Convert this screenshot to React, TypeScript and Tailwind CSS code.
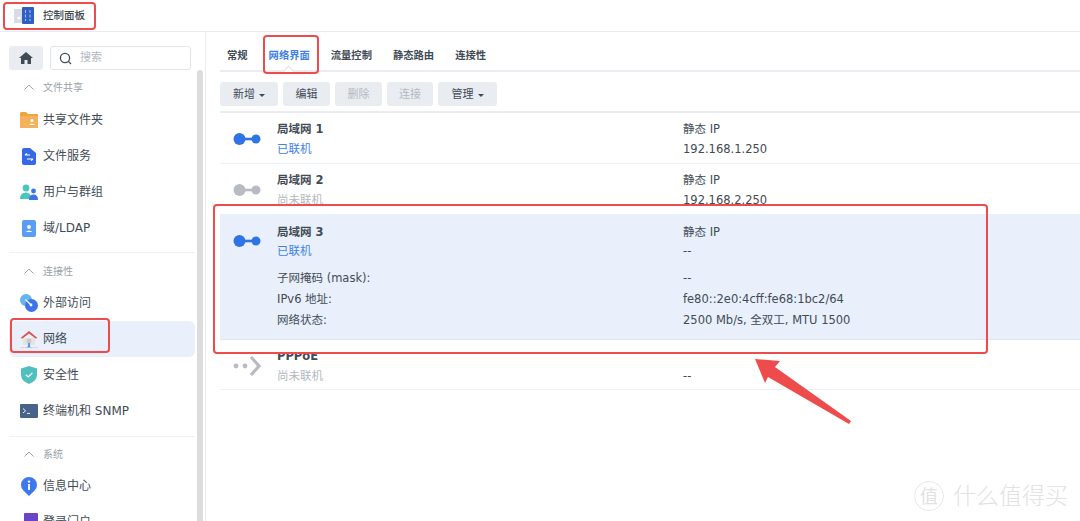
import React from 'react';

const font = { fontFamily: '"DejaVu Sans", "Noto Sans CJK SC", sans-serif' };

const LinkIcon = ({ color }: { color: string }) => (
  <svg width="28" height="16" viewBox="0 0 28 16" className="block">
    <circle cx="6.5" cy="8" r="6" fill={color} />
    <rect x="10" y="6.7" width="12" height="2.6" fill={color} />
    <circle cx="23" cy="8" r="4.5" fill={color} />
  </svg>
);

const PppoeIcon = () => (
  <svg width="28" height="22" viewBox="0 0 28 22" className="block">
    <circle cx="3" cy="11" r="2.4" fill="#b8bcc2" />
    <circle cx="12" cy="11" r="2.4" fill="#b8bcc2" />
    <path d="M18 2 L26 11 L18 20" fill="none" stroke="#b8bcc2" strokeWidth="3.2" />
  </svg>
);

const Icon = ({ name }: { name: string }) => {
  if (name === 'folder')
    return (
      <svg width="18" height="16" viewBox="0 0 18 16">
        <path d="M0 1.5 Q0 0 1.5 0 H6 L8 2 H17 Q18 2 18 3 V15 Q18 16 17 16 H1 Q0 16 0 15Z" fill="#f0a33e" />
        <path d="M0 4 H18 V15 Q18 16 17 16 H1 Q0 16 0 15Z" fill="#f6b25a" />
        <circle cx="12" cy="8.5" r="1.6" fill="#fff" />
        <path d="M8.8 13 Q12 9.8 15.2 13Z" fill="#fff" />
      </svg>
    );
  if (name === 'file')
    return (
      <svg width="16" height="17" viewBox="0 0 16 17">
        <path d="M1 2 Q1 0 3 0 H9 L15 5 V15 Q15 17 13 17 H3 Q1 17 1 15Z" fill="#3569e8" />
        <path d="M4 7 H9 M4 7 L6 5.4 M12 11 H6 M12 11 L10 12.6" stroke="#fff" strokeWidth="1.1" fill="none" />
      </svg>
    );
  if (name === 'users')
    return (
      <svg width="18" height="16" viewBox="0 0 18 16">
        <circle cx="6" cy="4" r="3.4" fill="#4cc4c0" />
        <path d="M0 15 Q0 8.5 6 8.5 Q11 8.5 11.5 15Z" fill="#4cc4c0" />
        <circle cx="13.5" cy="7" r="2.4" fill="#3f73e8" />
        <path d="M9 16 Q9 10.5 13.5 10.5 Q18 10.5 18 16Z" fill="#3f73e8" />
      </svg>
    );
  if (name === 'ldap')
    return (
      <svg width="16" height="17" viewBox="0 0 16 17">
        <rect x="1" y="0" width="14" height="17" rx="2" fill="#5a9df2" />
        <circle cx="8" cy="7" r="1.9" fill="#fff" />
        <path d="M4.5 12 Q8 8.8 11.5 12Z" fill="#fff" />
      </svg>
    );
  if (name === 'globe')
    return (
      <svg width="18" height="18" viewBox="0 0 18 18">
        <circle cx="6" cy="6" r="6" fill="#62b5ee" />
        <circle cx="11.5" cy="11.5" r="6.5" fill="#3f73e8" />
        <path d="M5.5 5.5 L11 11" stroke="#fff" strokeWidth="1.2" />
        <circle cx="11" cy="11" r="1.4" fill="#fff" />
      </svg>
    );
  if (name === 'net')
    return (
      <svg width="18" height="19" viewBox="0 0 18 19">
        <path d="M3 8 H15 V15 H3Z" fill="#e3e3e3" />
        <path d="M0.5 8 L9 1 L17.5 8 L15.5 8.6 L9 3.6 L2.5 8.6Z" fill="#d9534a" />
        <rect x="6.8" y="9" width="4.4" height="4" fill="#c9c9c9" />
        <rect x="8.2" y="13" width="1.6" height="3" fill="#3f80e8" />
        <path d="M6 18 L9 15.5 L12 18Z" fill="#3f80e8" />
        <path d="M0 17.6 H18" stroke="#cfd3d8" strokeWidth="0.9" />
      </svg>
    );
  if (name === 'shield')
    return (
      <svg width="16" height="18" viewBox="0 0 16 18">
        <path d="M8 0 L16 2.4 V9 Q16 15 8 18 Q0 15 0 9 V2.4Z" fill="#4fbfc0" />
        <path d="M4.8 8.8 L7.2 11 L11.4 6.8" stroke="#fff" strokeWidth="1.2" fill="none" />
      </svg>
    );
  if (name === 'term')
    return (
      <svg width="18" height="14" viewBox="0 0 18 14">
        <rect width="18" height="14" rx="1" fill="#47638a" />
        <path d="M3 4.5 L5.5 6.8 L3 9" stroke="#fff" strokeWidth="0.9" fill="none" />
        <path d="M7 9.4 H10" stroke="#fff" strokeWidth="0.9" />
      </svg>
    );
  if (name === 'info')
    return (
      <svg width="16" height="19" viewBox="0 0 16 19">
        <path d="M8 19 L2.4 13.6 Q0 11.4 0 8 A8 8 0 0 1 16 8 Q16 11.4 13.6 13.6Z" fill="#3c78ee" />
        <circle cx="8" cy="4.6" r="1.2" fill="#fff" />
        <rect x="7.1" y="7" width="1.8" height="6" fill="#fff" />
      </svg>
    );
  return (
    <svg width="18" height="18" viewBox="0 0 18 18">
      <rect x="4" y="0" width="14" height="16" rx="1" fill="#6a45c4" />
      <rect x="0" y="9" width="8" height="7" fill="#8e6be0" />
    </svg>
  );
};

const SideItem = ({ icon, label, active }: { icon: string; label: string; active?: boolean }) => (
  <div className={`flex h-9 items-center rounded-md text-[12px] text-[#414b55] ${active ? 'bg-[#e9f0fb]' : ''}`}>
    <div className="flex w-[34px] shrink-0 justify-center pl-[6px] pr-px">
      <Icon name={icon} />
    </div>
    <span>{label}</span>
  </div>
);

const SideGroup = ({ label }: { label: string }) => (
  <div className="flex h-[18px] items-center text-[10px] text-[#9aa2aa]">
    <svg width="10" height="6" viewBox="0 0 10 6" className="ml-[15px] mr-[9px]">
      <path d="M0.5 5.5 L5 1 L9.5 5.5" fill="none" stroke="#9aa2aa" strokeWidth="1" />
    </svg>
    <span>{label}</span>
  </div>
);

const Button = ({ label, w, caret, disabled }: { label: string; w: string; caret?: boolean; disabled?: boolean }) => (
  <div className={`flex h-6 items-center justify-center rounded-[3px] bg-[#e9edf1] pt-[2px] text-[11px] ${w} ${disabled ? 'text-[#b3b9bf]' : 'text-[#414b55]'}`}>
    {label}
    {caret && <span className="ml-1 h-0 w-0 border-x-[3px] border-t-[3px] border-x-transparent border-t-[#414b55]" />}
  </div>
);

const Row = ({
  icon,
  title,
  status,
  statusColor,
  type,
  value,
  className,
}: {
  icon: React.ReactNode;
  title: string;
  status: string;
  statusColor: string;
  type: string;
  value: string;
  className: string;
}) => (
  <div className={`grid grid-cols-[57px_406px_1fr] border-b border-[#eef1f4] pt-[6px] text-[11.5px] leading-5 text-[#414b55] ${className}`}>
    <div className="flex h-[39px] items-center pl-[13px]">{icon}</div>
    <div>
      <div className="font-semibold">{title}</div>
      <div className={statusColor}>{status}</div>
    </div>
    <div>
      <div className="h-5">{type}</div>
      <div>{value}</div>
    </div>
  </div>
);

export default function App() {
  return (
    <div className="relative flex h-[521px] w-[1080px] flex-col overflow-hidden bg-white" style={font}>
      {/* title bar */}
      <div className="flex h-8 shrink-0 items-center border-b border-[#e8ecf0] pl-[14px]">
        <svg width="20" height="18" viewBox="0 0 20 18">
          <rect x="0" y="2" width="10" height="14" rx="1" fill="#d8dbe6" />
          <circle cx="5" cy="11" r="1.6" fill="#fff" />
          <rect x="8" y="0" width="12" height="17" rx="1" fill="#2f5fc4" />
          <path d="M11.5 3 V14 M16 3 V14" stroke="#9cc0f5" strokeWidth="1.1" strokeDasharray="3 1.5" />
        </svg>
        <span className="ml-[9px] text-[10.5px] font-medium text-[#3c454e]">控制面板</span>
      </div>

      <div className="flex min-h-0 flex-1">
        {/* sidebar */}
        <div className="relative w-[206px] shrink-0 overflow-hidden border-r border-[#e8ecf0] pl-[9px] pr-[10px] pt-[14px]">
          <div className="flex h-6 gap-[7px]">
            <div className="flex w-[34px] items-center justify-center rounded-[3px] bg-[#e9edf1]">
              <svg width="14" height="12" viewBox="0 0 14 12">
                <path d="M7 0 L14 6 H12 V12 H8.5 V8 H5.5 V12 H2 V6 H0Z" fill="#414b55" />
              </svg>
            </div>
            <div className="flex w-[141px] items-center rounded-[3px] border border-[#dfe5ea] pl-2 pt-px text-[11px] text-[#b3b9bf]">
              <svg width="13" height="13" viewBox="0 0 13 13" className="mr-[8px]">
                <circle cx="6" cy="6" r="4.6" fill="none" stroke="#414b55" strokeWidth="1.3" />
                <path d="M9.4 9.4 L12 12" stroke="#414b55" strokeWidth="1.3" />
              </svg>
              搜索
            </div>
          </div>
          <div className="mt-2">
            <SideGroup label="文件共享" />
          </div>
          <div className="mt-[6px]">
            <SideItem icon="folder" label="共享文件夹" />
            <SideItem icon="file" label="文件服务" />
            <SideItem icon="users" label="用户与群组" />
            <SideItem icon="ldap" label="域/LDAP" />
          </div>
          <div className="mt-[6px] border-t border-[#eef1f4] pt-[9px]">
            <SideGroup label="连接性" />
          </div>
          <div className="mt-[5px]">
            <SideItem icon="globe" label="外部访问" />
            <SideItem icon="net" label="网络" active />
            <SideItem icon="shield" label="安全性" />
            <SideItem icon="term" label="终端机和 SNMP" />
          </div>
          <div className="mt-[7px] border-t border-[#eef1f4] pt-[8px]">
            <SideGroup label="系统" />
          </div>
          <div className="mt-[5px]">
            <SideItem icon="info" label="信息中心" />
            <SideItem icon="login" label="登录门户" />
          </div>
          {/* scrollbar */}
          <div className="absolute bottom-0 right-[2px] top-[38px] w-[6px] rounded-t-[3px] bg-[#dcdcdc]" />
        </div>

        {/* main */}
        <div className="min-w-0 flex-1 pl-[14px]">
          <div className="relative flex h-10 items-center gap-[21px] border-b-2 border-[#e9edf1] pl-[7px] pt-[10px] text-[10.3px] font-semibold text-[#414b55]">
            <span>常规</span>
            <span className="text-[#3f80e8]">网络界面</span>
            <span>流量控制</span>
            <span>静态路由</span>
            <span>连接性</span>
            <span className="absolute left-[65px] top-[35px] h-[7px] w-[7px] rotate-45 border-l border-t border-[#e0e4e8] bg-white" />
          </div>
          <div className="flex h-[41px] gap-[5px] border-b-2 border-[#e9edf1] pt-[10px]">
            <Button label="新增" w="w-[58px]" caret />
            <Button label="编辑" w="w-[47px]" />
            <Button label="删除" w="w-[47px]" disabled />
            <Button label="连接" w="w-[46px]" disabled />
            <Button label="管理" w="w-[59px]" caret />
          </div>
          <Row className="h-[51px]" icon={<LinkIcon color="#2f74e4" />} title="局域网 1" status="已联机" statusColor="text-[#3f80e8]" type="静态 IP" value="192.168.1.250" />
          <Row className="h-[50px]" icon={<LinkIcon color="#b8bcc2" />} title="局域网 2" status="尚未联机" statusColor="text-[#b3b9bf]" type="静态 IP" value="192.168.2.250" />
          <div className="h-[126px] border-b border-[#dfe6f0] bg-[#e9f0fb] pt-[8px] text-[11.5px] leading-[21px] text-[#414b55]">
            <div className="grid grid-cols-[57px_406px_1fr] leading-5">
              <div className="mt-[-1px] flex h-[39px] items-center pl-[13px]">
                <LinkIcon color="#2f74e4" />
              </div>
              <div>
                <div className="font-semibold">局域网 3</div>
                <div className="mt-[-1px] text-[#3f80e8]">已联机</div>
              </div>
              <div>
                <div>静态 IP</div>
                <div className="mt-[-1px]">--</div>
              </div>
            </div>
            <div className="mt-[7px] grid grid-cols-[57px_406px_1fr]">
              <div />
              <div>子网掩码 (mask):</div>
              <div>--</div>
              <div />
              <div>IPv6 地址:</div>
              <div>fe80::2e0:4cff:fe68:1bc2/64</div>
              <div />
              <div>网络状态:</div>
              <div>2500 Mb/s, 全双工, MTU 1500</div>
            </div>
          </div>
          <Row className="h-[50px]" icon={<PppoeIcon />} title="PPPoE" status="尚未联机" statusColor="text-[#b3b9bf]" type="" value="--" />
        </div>
      </div>

      {/* annotations drawn over the screenshot */}
      <div className="absolute left-[3px] top-[2px] h-[28px] w-[93px] rounded-[4px] border-2 border-[#ee4c4c]" />
      <div className="absolute left-[10px] top-[318px] h-[35px] w-[100px] rounded-[4px] border-2 border-[#ee4c4c]" />
      <div className="absolute left-[263px] top-[35px] h-[39px] w-[56px] rounded-[4px] border-2 border-[#ee4c4c]" />
      <div className="absolute left-[207px] top-[204px] h-[10px] w-[873px] bg-white" />
      <div className="absolute left-[213px] top-[340px] h-[13px] w-[774px] bg-white" />
      <div className="absolute left-[213px] top-[204px] h-[150px] w-[775px] rounded-[4px] border-2 border-[#ee4c4c]" />
      <svg className="absolute left-[750px] top-[355px]" width="105" height="72" viewBox="0 0 105 72">
        <path d="M5 4 L30 6 L25 12 L101 66 L99 69 L18 22 L15 28Z" fill="#ee4c4c" />
      </svg>

      {/* watermark */}
      <div className="absolute bottom-[10px] right-[12px] flex items-center text-[#e2e2e2]">
        <span className="flex h-[30px] w-[30px] items-center justify-center rounded-full border border-[#e8e8e8] text-[18px]">值</span>
        <span className="ml-[9px] text-[23px] font-light leading-none">什么值得买</span>
      </div>
    </div>
  );
}
